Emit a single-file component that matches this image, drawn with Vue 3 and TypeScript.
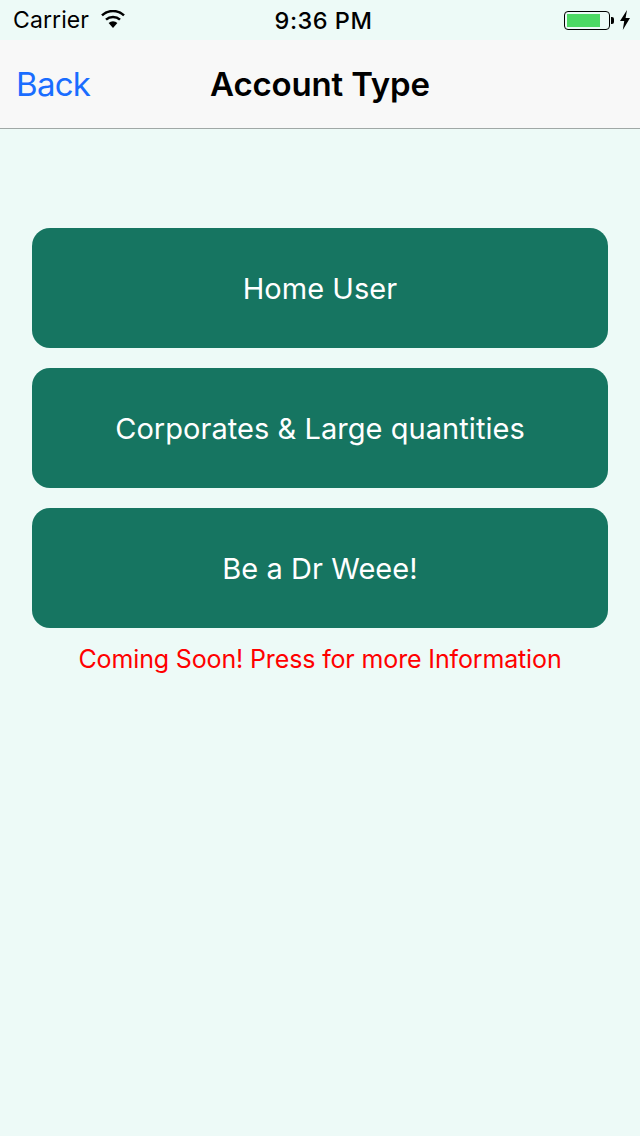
<script setup lang="ts">
const buttons: string[] = ['Home User', 'Corporates & Large quantities', 'Be a Dr Weee!']
</script>

<template>
  <div class="screen">
    <div class="status">
      <div class="status-left">
        <span class="carrier">Carrier</span>
        <svg class="wifi" width="26" height="20" viewBox="0 0 26 20">
          <path d="M13 18 L8.6 13 A6.6 6.6 0 0 1 17.4 13 Z" fill="#000" />
          <path d="M6 9.6 A10.4 10.4 0 0 1 20 9.6" fill="none" stroke="#000" stroke-width="2.5" />
          <path d="M2 5.4 A16 16 0 0 1 24 5.4" fill="none" stroke="#000" stroke-width="2.5" />
        </svg>
      </div>
      <span class="time">9:36 PM</span>
      <div class="status-right">
        <div class="battery"><div class="level"></div></div>
        <div class="nub"></div>
        <svg class="bolt" width="12" height="20" viewBox="0 0 12 20">
          <path d="M8 0 L1 11 H5.2 L3.8 20 L11 8 H6.6 Z" fill="#000" />
        </svg>
      </div>
    </div>
    <div class="nav">
      <span class="back">Back</span>
      <span class="title">Account Type</span>
    </div>
    <main class="content">
      <button v-for="b in buttons" :key="b" class="action">{{ b }}</button>
      <p class="note">Coming Soon! Press for more Information</p>
    </main>
  </div>
</template>

<style>
html, body { margin: 0; padding: 0; }
</style>

<style scoped>
.screen {
  width: 640px;
  height: 1136px;
  background: #edfaf7;
  font-family: Inter, "Liberation Sans", sans-serif;
  display: flex;
  flex-direction: column;
  overflow: hidden;
}
.status {
  height: 40px;
  display: flex;
  align-items: center;
  justify-content: space-between;
  position: relative;
  padding: 0 9px 0 13px;
  box-sizing: border-box;
  color: #000;
}
.status-left, .status-right { display: flex; align-items: center; }
.carrier { font-size: 23px; letter-spacing: 0.1px; }
.wifi { margin-left: 11px; }
.time {
  position: absolute;
  left: 7px;
  right: 0;
  text-align: center;
  font-size: 23.5px;
  font-weight: 500;
  letter-spacing: 0.5px;
}
.battery {
  width: 46px;
  height: 19px;
  box-sizing: border-box;
  border: 1.5px solid #000;
  border-radius: 4px;
  padding: 2px;
}
.level { width: 33px; height: 100%; background: #4cd964; }
.nub { width: 3px; height: 7px; background: #000; border-radius: 0 2px 2px 0; margin-left: 1px; }
.bolt { margin-left: 5px; }
.nav {
  height: 89px;
  box-sizing: border-box;
  background: #f8f8f8;
  border-bottom: 1px solid #a0a8a6;
  display: flex;
  align-items: center;
  position: relative;
  padding-left: 16px;
}
.back { color: #1a6dff; font-size: 33px; font-weight: 400; letter-spacing: -0.7px; }
.title {
  position: absolute;
  left: 0;
  right: 0;
  text-align: center;
  font-size: 33px;
  font-weight: 600;
  letter-spacing: -0.15px;
  color: #000;
}
.content {
  padding: 99px 32px 0;
  display: flex;
  flex-direction: column;
  gap: 20px;
}
.action {
  height: 120px;
  border: 0;
  border-radius: 18px;
  background: #167561;
  color: #fff;
  font-family: inherit;
  font-size: 29px;
  letter-spacing: 0.05px;
  padding: 0;
}
.note {
  margin: -9px 0 0;
  text-align: center;
  color: #ff0000;
  font-size: 25px;
  letter-spacing: -0.14px;
  line-height: 40px;
}
</style>
